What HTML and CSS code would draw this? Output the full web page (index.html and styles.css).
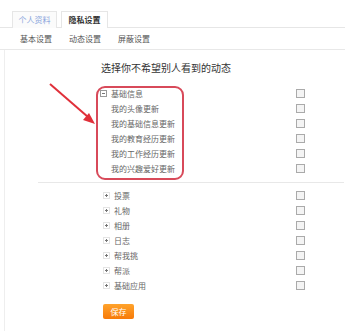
FILE: index.html
```html
<!DOCTYPE html>
<html>
<head>
<meta charset="utf-8">
<link rel="stylesheet" href="styles.css">
</head>
<body>
<div class="page">
  <div class="tabs">
    <div class="tab">个人资料</div>
    <div class="tab active">隐私设置</div>
  </div>
  <div class="subnav">
    <span class="sub">基本设置</span>
    <span class="sub">动态设置</span>
    <span class="sub">屏蔽设置</span>
  </div>
  <div class="panel">
    <div class="title">选择你不希望别人看到的动态</div>
    <div class="group first">
      <div class="row head"><span class="tog minus"></span><span class="lbl">基础信息</span><span class="cb"></span></div>
      <div class="row child"><span class="lbl">我的头像更新</span><span class="cb"></span></div>
      <div class="row child"><span class="lbl">我的基础信息更新</span><span class="cb"></span></div>
      <div class="row child"><span class="lbl">我的教育经历更新</span><span class="cb"></span></div>
      <div class="row child"><span class="lbl">我的工作经历更新</span><span class="cb"></span></div>
      <div class="row child"><span class="lbl">我的兴趣爱好更新</span><span class="cb"></span></div>
      <div class="mark"></div>
      <svg class="arrow" width="60" height="50" viewBox="0 0 60 50">
        <line x1="2" y1="2" x2="40" y2="35" stroke="#e0303a" stroke-width="2"/>
        <polygon points="47,42 35,38 41,31" fill="#e0303a"/>
      </svg>
    </div>
    <div class="sep"></div>
    <div class="group second">
      <div class="row head"><span class="tog plus"></span><span class="lbl">投票</span><span class="cb"></span></div>
      <div class="row head"><span class="tog plus"></span><span class="lbl">礼物</span><span class="cb"></span></div>
      <div class="row head"><span class="tog plus"></span><span class="lbl">相册</span><span class="cb"></span></div>
      <div class="row head"><span class="tog plus"></span><span class="lbl">日志</span><span class="cb"></span></div>
      <div class="row head"><span class="tog plus"></span><span class="lbl">帮我挑</span><span class="cb"></span></div>
      <div class="row head"><span class="tog plus"></span><span class="lbl">帮派</span><span class="cb"></span></div>
      <div class="row head"><span class="tog plus"></span><span class="lbl">基础应用</span><span class="cb"></span></div>
    </div>
    <div class="actions"><button class="save">保存</button></div>
  </div>
</div>
</body>
</html>
```
FILE: styles.css
```css
* { box-sizing: border-box; }
html, body { margin: 0; padding: 0; background: #fff; }
body {
  font-family: "Noto Sans CJK SC", "Noto Sans", sans-serif;
  font-size: 8px;
  color: #666;
  width: 351px;
  height: 331px;
  overflow: hidden;
}
.page { padding-top: 11px; }
.tabs {
  display: flex;
  height: 17px;
  padding-left: 12px;
  border-bottom: 1px solid #e6e6e6;
  margin-right: 6px;
}
.tab {
  width: 45px;
  height: 17px;
  line-height: 15px;
  text-align: center;
  color: #8aa6dc;
  border: 1px solid #e6e6e6;
  border-bottom: none;
  background: #fbfbfb;
  margin-right: 4px;
}
.tab.active {
  width: 47px;
  color: #333;
  font-weight: bold;
  background: #fff;
  height: 17px;
  margin-bottom: -1px;
}
.subnav {
  display: flex;
  height: 22px;
  align-items: center;
  padding-left: 20px;
  gap: 17px;
  border-bottom: 1px solid #e8e8e8;
  margin-right: 6px;
  color: #555;
}
.panel {
  border-left: 1px solid #eee;
  margin-left: 4px;
  height: 290px;
  padding-top: 11px;
}
.title {
  padding-left: 96px;
  font-size: 10px;
  color: #333;
  height: 14px;
  line-height: 14px;
  margin-bottom: 11px;
}
.group { position: relative; }
.row {
  display: flex;
  align-items: center;
  height: 15px;
  padding-left: 95px;
  padding-right: 46px;
}
.row.child { padding-left: 106px; }
.second .row { padding-left: 98px; }
.tog {
  width: 7px;
  height: 7px;
  border: 1px solid #999;
  position: relative;
  margin-right: 4px;
  flex: none;
}
.tog::before {
  content: "";
  position: absolute;
  left: 1px; top: 2px;
  width: 3px; height: 1px;
  background: #777;
}
.tog.plus::after {
  content: "";
  position: absolute;
  left: 2px; top: 1px;
  width: 1px; height: 3px;
  background: #777;
}
.second .tog { border-color: #e4e4e4; }
.lbl { flex: 1; }
.cb {
  width: 9px;
  height: 9px;
  border: 1px solid #aaa;
  background: #f4f4f4;
  flex: none;
}
.mark {
  position: absolute;
  left: 91px;
  top: 0;
  width: 88px;
  height: 94px;
  border: 2px solid #d84a5a;
  border-radius: 9px;
}
.arrow {
  position: absolute;
  left: 43px;
  top: -4px;
}
.sep {
  height: 1px;
  background: #e8e8e8;
  margin: 6px 7px 5px 33px;
}
.actions { padding-left: 98px; padding-top: 11px; }
.save {
  width: 31px;
  height: 15px;
  border: none;
  border-radius: 2px;
  background: linear-gradient(#ffa32c, #f77a08);
  color: #fff;
  font-family: "Noto Sans CJK SC", sans-serif;
  font-size: 8px;
  padding: 0;
  line-height: 15px;
}
```
